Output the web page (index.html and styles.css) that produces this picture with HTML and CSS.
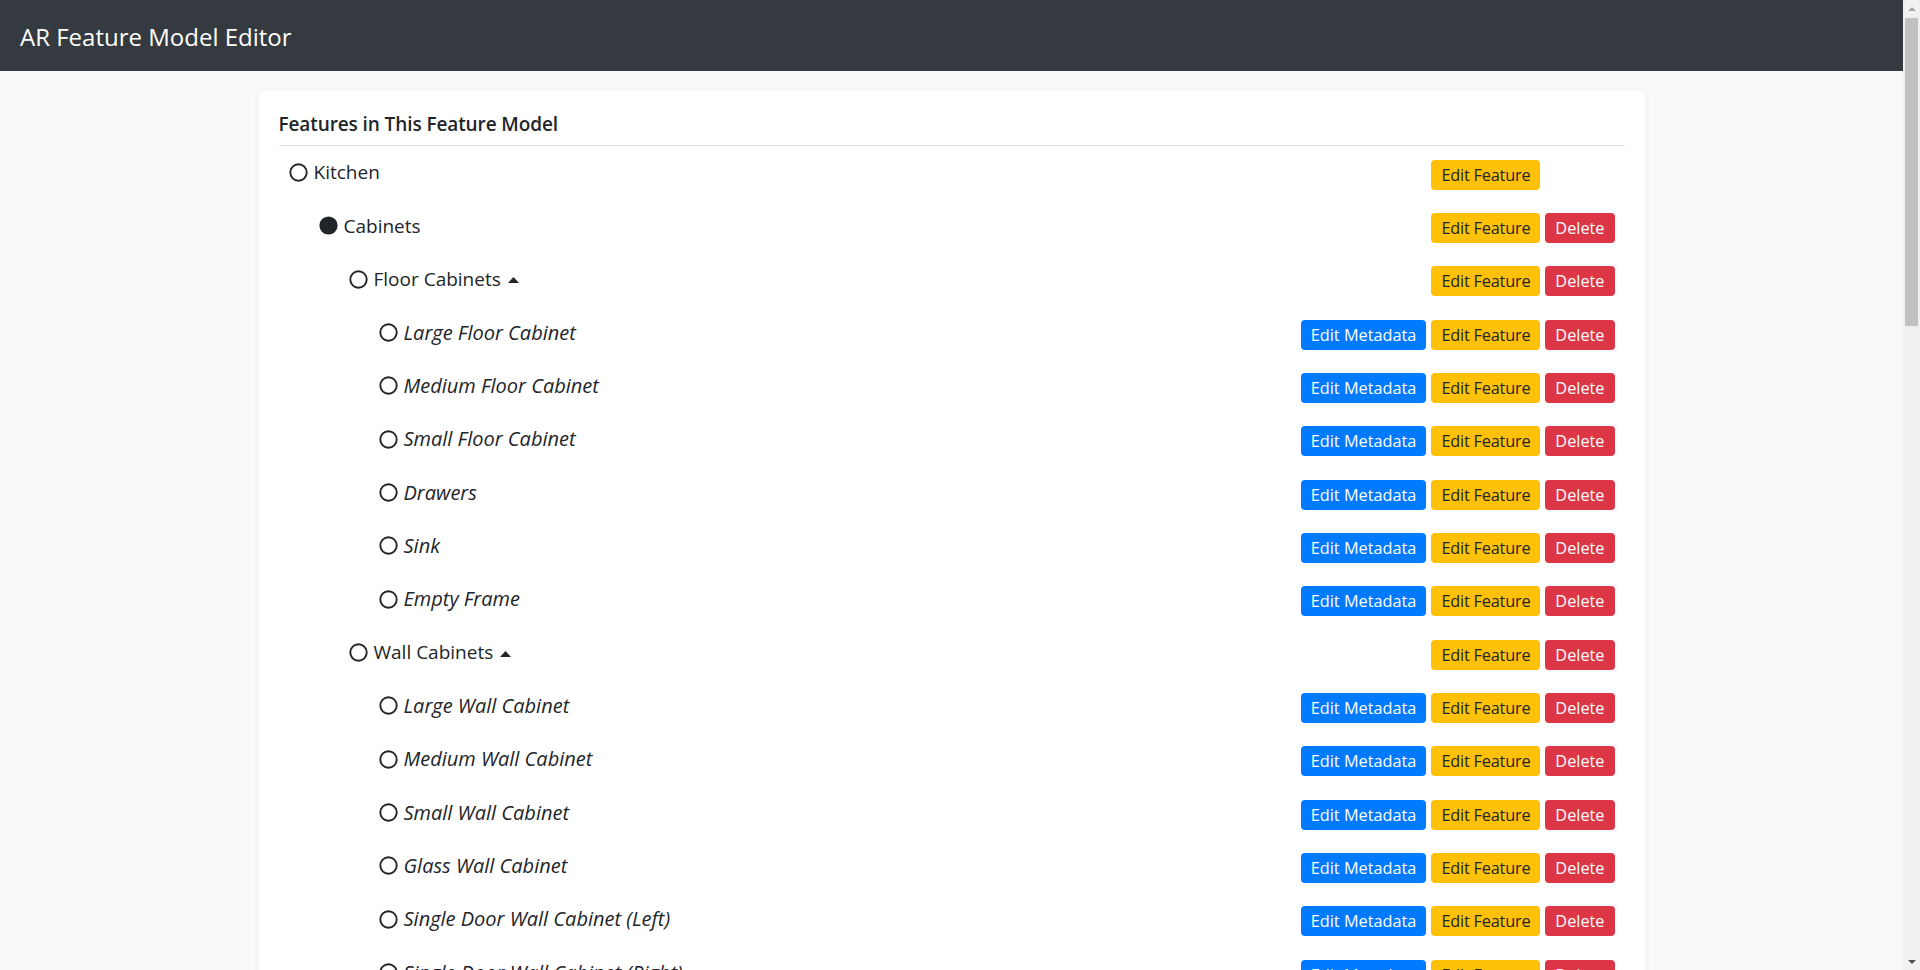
FILE: index.html
```html
<!DOCTYPE html>
<html lang="en">
<head>
<meta charset="utf-8">
<title>AR Feature Model Editor</title>
<link rel="stylesheet" href="styles.css">
</head>
<body>
<div class="page">
<div class="content">
<nav class="navbar"><span class="brand">AR Feature Model Editor</span></nav>
<main class="container">
  <section class="card">
    <h5 class="card-title">Features in This Feature Model</h5>
    <ul class="tree">
      <li class="node lvl-0"><span class="label"><svg class="ico" viewBox="0 0 19 19"><circle cx="9.5" cy="9.5" r="8.2" fill="none" stroke="currentColor" stroke-width="1.9"/></svg>Kitchen</span><span class="actions"><button class="btn btn-warning">Edit Feature</button><button class="btn btn-danger is-hidden">Delete</button></span></li>
      <li class="node lvl-1"><span class="label"><svg class="ico" viewBox="0 0 19 19"><circle cx="9.5" cy="9.5" r="9.1" fill="currentColor"/></svg>Cabinets</span><span class="actions"><button class="btn btn-warning">Edit Feature</button><button class="btn btn-danger">Delete</button></span></li>
      <li class="node lvl-2"><span class="label"><svg class="ico" viewBox="0 0 19 19"><circle cx="9.5" cy="9.5" r="8.2" fill="none" stroke="currentColor" stroke-width="1.9"/></svg>Floor Cabinets<svg class="caret" viewBox="0 0 11 6"><path d="M0 6 L5.5 0 L11 6 Z" fill="currentColor"/></svg></span><span class="actions"><button class="btn btn-warning">Edit Feature</button><button class="btn btn-danger">Delete</button></span></li>
      <li class="node lvl-3"><span class="label"><svg class="ico" viewBox="0 0 19 19"><circle cx="9.5" cy="9.5" r="8.2" fill="none" stroke="currentColor" stroke-width="1.9"/></svg><em>Large Floor Cabinet</em></span><span class="actions"><button class="btn btn-primary">Edit Metadata</button><button class="btn btn-warning">Edit Feature</button><button class="btn btn-danger">Delete</button></span></li>
      <li class="node lvl-3"><span class="label"><svg class="ico" viewBox="0 0 19 19"><circle cx="9.5" cy="9.5" r="8.2" fill="none" stroke="currentColor" stroke-width="1.9"/></svg><em>Medium Floor Cabinet</em></span><span class="actions"><button class="btn btn-primary">Edit Metadata</button><button class="btn btn-warning">Edit Feature</button><button class="btn btn-danger">Delete</button></span></li>
      <li class="node lvl-3"><span class="label"><svg class="ico" viewBox="0 0 19 19"><circle cx="9.5" cy="9.5" r="8.2" fill="none" stroke="currentColor" stroke-width="1.9"/></svg><em>Small Floor Cabinet</em></span><span class="actions"><button class="btn btn-primary">Edit Metadata</button><button class="btn btn-warning">Edit Feature</button><button class="btn btn-danger">Delete</button></span></li>
      <li class="node lvl-3"><span class="label"><svg class="ico" viewBox="0 0 19 19"><circle cx="9.5" cy="9.5" r="8.2" fill="none" stroke="currentColor" stroke-width="1.9"/></svg><em>Drawers</em></span><span class="actions"><button class="btn btn-primary">Edit Metadata</button><button class="btn btn-warning">Edit Feature</button><button class="btn btn-danger">Delete</button></span></li>
      <li class="node lvl-3"><span class="label"><svg class="ico" viewBox="0 0 19 19"><circle cx="9.5" cy="9.5" r="8.2" fill="none" stroke="currentColor" stroke-width="1.9"/></svg><em>Sink</em></span><span class="actions"><button class="btn btn-primary">Edit Metadata</button><button class="btn btn-warning">Edit Feature</button><button class="btn btn-danger">Delete</button></span></li>
      <li class="node lvl-3"><span class="label"><svg class="ico" viewBox="0 0 19 19"><circle cx="9.5" cy="9.5" r="8.2" fill="none" stroke="currentColor" stroke-width="1.9"/></svg><em>Empty Frame</em></span><span class="actions"><button class="btn btn-primary">Edit Metadata</button><button class="btn btn-warning">Edit Feature</button><button class="btn btn-danger">Delete</button></span></li>
      <li class="node lvl-2"><span class="label"><svg class="ico" viewBox="0 0 19 19"><circle cx="9.5" cy="9.5" r="8.2" fill="none" stroke="currentColor" stroke-width="1.9"/></svg>Wall Cabinets<svg class="caret" viewBox="0 0 11 6"><path d="M0 6 L5.5 0 L11 6 Z" fill="currentColor"/></svg></span><span class="actions"><button class="btn btn-warning">Edit Feature</button><button class="btn btn-danger">Delete</button></span></li>
      <li class="node lvl-3"><span class="label"><svg class="ico" viewBox="0 0 19 19"><circle cx="9.5" cy="9.5" r="8.2" fill="none" stroke="currentColor" stroke-width="1.9"/></svg><em>Large Wall Cabinet</em></span><span class="actions"><button class="btn btn-primary">Edit Metadata</button><button class="btn btn-warning">Edit Feature</button><button class="btn btn-danger">Delete</button></span></li>
      <li class="node lvl-3"><span class="label"><svg class="ico" viewBox="0 0 19 19"><circle cx="9.5" cy="9.5" r="8.2" fill="none" stroke="currentColor" stroke-width="1.9"/></svg><em>Medium Wall Cabinet</em></span><span class="actions"><button class="btn btn-primary">Edit Metadata</button><button class="btn btn-warning">Edit Feature</button><button class="btn btn-danger">Delete</button></span></li>
      <li class="node lvl-3"><span class="label"><svg class="ico" viewBox="0 0 19 19"><circle cx="9.5" cy="9.5" r="8.2" fill="none" stroke="currentColor" stroke-width="1.9"/></svg><em>Small Wall Cabinet</em></span><span class="actions"><button class="btn btn-primary">Edit Metadata</button><button class="btn btn-warning">Edit Feature</button><button class="btn btn-danger">Delete</button></span></li>
      <li class="node lvl-3"><span class="label"><svg class="ico" viewBox="0 0 19 19"><circle cx="9.5" cy="9.5" r="8.2" fill="none" stroke="currentColor" stroke-width="1.9"/></svg><em>Glass Wall Cabinet</em></span><span class="actions"><button class="btn btn-primary">Edit Metadata</button><button class="btn btn-warning">Edit Feature</button><button class="btn btn-danger">Delete</button></span></li>
      <li class="node lvl-3"><span class="label"><svg class="ico" viewBox="0 0 19 19"><circle cx="9.5" cy="9.5" r="8.2" fill="none" stroke="currentColor" stroke-width="1.9"/></svg><em>Single Door Wall Cabinet (Left)</em></span><span class="actions"><button class="btn btn-primary">Edit Metadata</button><button class="btn btn-warning">Edit Feature</button><button class="btn btn-danger">Delete</button></span></li>
      <li class="node lvl-3"><span class="label"><svg class="ico" viewBox="0 0 19 19"><circle cx="9.5" cy="9.5" r="8.2" fill="none" stroke="currentColor" stroke-width="1.9"/></svg><em>Single Door Wall Cabinet (Right)</em></span><span class="actions"><button class="btn btn-primary">Edit Metadata</button><button class="btn btn-warning">Edit Feature</button><button class="btn btn-danger">Delete</button></span></li>
      <li class="node lvl-3"><span class="label"><svg class="ico" viewBox="0 0 19 19"><circle cx="9.5" cy="9.5" r="8.2" fill="none" stroke="currentColor" stroke-width="1.9"/></svg><em>Corner Wall Cabinet</em></span><span class="actions"><button class="btn btn-primary">Edit Metadata</button><button class="btn btn-warning">Edit Feature</button><button class="btn btn-danger">Delete</button></span></li>
      <li class="node lvl-3"><span class="label"><svg class="ico" viewBox="0 0 19 19"><circle cx="9.5" cy="9.5" r="8.2" fill="none" stroke="currentColor" stroke-width="1.9"/></svg><em>Open Shelf</em></span><span class="actions"><button class="btn btn-primary">Edit Metadata</button><button class="btn btn-warning">Edit Feature</button><button class="btn btn-danger">Delete</button></span></li>
      <li class="node lvl-2"><span class="label"><svg class="ico" viewBox="0 0 19 19"><circle cx="9.5" cy="9.5" r="8.2" fill="none" stroke="currentColor" stroke-width="1.9"/></svg>Tall Cabinets<svg class="caret" viewBox="0 0 11 6"><path d="M0 6 L5.5 0 L11 6 Z" fill="currentColor"/></svg></span><span class="actions"><button class="btn btn-warning">Edit Feature</button><button class="btn btn-danger">Delete</button></span></li>
      <li class="node lvl-3"><span class="label"><svg class="ico" viewBox="0 0 19 19"><circle cx="9.5" cy="9.5" r="8.2" fill="none" stroke="currentColor" stroke-width="1.9"/></svg><em>Pantry Cabinet</em></span><span class="actions"><button class="btn btn-primary">Edit Metadata</button><button class="btn btn-warning">Edit Feature</button><button class="btn btn-danger">Delete</button></span></li>
      <li class="node lvl-3"><span class="label"><svg class="ico" viewBox="0 0 19 19"><circle cx="9.5" cy="9.5" r="8.2" fill="none" stroke="currentColor" stroke-width="1.9"/></svg><em>Oven Tower</em></span><span class="actions"><button class="btn btn-primary">Edit Metadata</button><button class="btn btn-warning">Edit Feature</button><button class="btn btn-danger">Delete</button></span></li>
      <li class="node lvl-3"><span class="label"><svg class="ico" viewBox="0 0 19 19"><circle cx="9.5" cy="9.5" r="8.2" fill="none" stroke="currentColor" stroke-width="1.9"/></svg><em>Fridge Housing</em></span><span class="actions"><button class="btn btn-primary">Edit Metadata</button><button class="btn btn-warning">Edit Feature</button><button class="btn btn-danger">Delete</button></span></li>
      <li class="node lvl-1"><span class="label"><svg class="ico" viewBox="0 0 19 19"><circle cx="9.5" cy="9.5" r="8.2" fill="none" stroke="currentColor" stroke-width="1.9"/></svg>Countertops</span><span class="actions"><button class="btn btn-warning">Edit Feature</button><button class="btn btn-danger">Delete</button></span></li>
      <li class="node lvl-2"><span class="label"><svg class="ico" viewBox="0 0 19 19"><circle cx="9.5" cy="9.5" r="8.2" fill="none" stroke="currentColor" stroke-width="1.9"/></svg><em>Granite</em></span><span class="actions"><button class="btn btn-primary">Edit Metadata</button><button class="btn btn-warning">Edit Feature</button><button class="btn btn-danger">Delete</button></span></li>
      <li class="node lvl-2"><span class="label"><svg class="ico" viewBox="0 0 19 19"><circle cx="9.5" cy="9.5" r="8.2" fill="none" stroke="currentColor" stroke-width="1.9"/></svg><em>Marble</em></span><span class="actions"><button class="btn btn-primary">Edit Metadata</button><button class="btn btn-warning">Edit Feature</button><button class="btn btn-danger">Delete</button></span></li>
      <li class="node lvl-2"><span class="label"><svg class="ico" viewBox="0 0 19 19"><circle cx="9.5" cy="9.5" r="8.2" fill="none" stroke="currentColor" stroke-width="1.9"/></svg><em>Wood</em></span><span class="actions"><button class="btn btn-primary">Edit Metadata</button><button class="btn btn-warning">Edit Feature</button><button class="btn btn-danger">Delete</button></span></li>
      <li class="node lvl-1"><span class="label"><svg class="ico" viewBox="0 0 19 19"><circle cx="9.5" cy="9.5" r="8.2" fill="none" stroke="currentColor" stroke-width="1.9"/></svg>Appliances</span><span class="actions"><button class="btn btn-warning">Edit Feature</button><button class="btn btn-danger">Delete</button></span></li>
      <li class="node lvl-2"><span class="label"><svg class="ico" viewBox="0 0 19 19"><circle cx="9.5" cy="9.5" r="8.2" fill="none" stroke="currentColor" stroke-width="1.9"/></svg><em>Refrigerator</em></span><span class="actions"><button class="btn btn-primary">Edit Metadata</button><button class="btn btn-warning">Edit Feature</button><button class="btn btn-danger">Delete</button></span></li>
      <li class="node lvl-2"><span class="label"><svg class="ico" viewBox="0 0 19 19"><circle cx="9.5" cy="9.5" r="8.2" fill="none" stroke="currentColor" stroke-width="1.9"/></svg><em>Oven</em></span><span class="actions"><button class="btn btn-primary">Edit Metadata</button><button class="btn btn-warning">Edit Feature</button><button class="btn btn-danger">Delete</button></span></li>
      <li class="node lvl-2"><span class="label"><svg class="ico" viewBox="0 0 19 19"><circle cx="9.5" cy="9.5" r="8.2" fill="none" stroke="currentColor" stroke-width="1.9"/></svg><em>Cooktop</em></span><span class="actions"><button class="btn btn-primary">Edit Metadata</button><button class="btn btn-warning">Edit Feature</button><button class="btn btn-danger">Delete</button></span></li>
      <li class="node lvl-2"><span class="label"><svg class="ico" viewBox="0 0 19 19"><circle cx="9.5" cy="9.5" r="8.2" fill="none" stroke="currentColor" stroke-width="1.9"/></svg><em>Range Hood</em></span><span class="actions"><button class="btn btn-primary">Edit Metadata</button><button class="btn btn-warning">Edit Feature</button><button class="btn btn-danger">Delete</button></span></li>
      <li class="node lvl-2"><span class="label"><svg class="ico" viewBox="0 0 19 19"><circle cx="9.5" cy="9.5" r="8.2" fill="none" stroke="currentColor" stroke-width="1.9"/></svg><em>Dishwasher</em></span><span class="actions"><button class="btn btn-primary">Edit Metadata</button><button class="btn btn-warning">Edit Feature</button><button class="btn btn-danger">Delete</button></span></li>
      <li class="node lvl-2"><span class="label"><svg class="ico" viewBox="0 0 19 19"><circle cx="9.5" cy="9.5" r="8.2" fill="none" stroke="currentColor" stroke-width="1.9"/></svg><em>Microwave</em></span><span class="actions"><button class="btn btn-primary">Edit Metadata</button><button class="btn btn-warning">Edit Feature</button><button class="btn btn-danger">Delete</button></span></li>
      <li class="node lvl-1"><span class="label"><svg class="ico" viewBox="0 0 19 19"><circle cx="9.5" cy="9.5" r="8.2" fill="none" stroke="currentColor" stroke-width="1.9"/></svg>Handles</span><span class="actions"><button class="btn btn-warning">Edit Feature</button><button class="btn btn-danger">Delete</button></span></li>
      <li class="node lvl-2"><span class="label"><svg class="ico" viewBox="0 0 19 19"><circle cx="9.5" cy="9.5" r="8.2" fill="none" stroke="currentColor" stroke-width="1.9"/></svg><em>Bar Handle</em></span><span class="actions"><button class="btn btn-primary">Edit Metadata</button><button class="btn btn-warning">Edit Feature</button><button class="btn btn-danger">Delete</button></span></li>
      <li class="node lvl-2"><span class="label"><svg class="ico" viewBox="0 0 19 19"><circle cx="9.5" cy="9.5" r="8.2" fill="none" stroke="currentColor" stroke-width="1.9"/></svg><em>Knob</em></span><span class="actions"><button class="btn btn-primary">Edit Metadata</button><button class="btn btn-warning">Edit Feature</button><button class="btn btn-danger">Delete</button></span></li>
      <li class="node lvl-2"><span class="label"><svg class="ico" viewBox="0 0 19 19"><circle cx="9.5" cy="9.5" r="8.2" fill="none" stroke="currentColor" stroke-width="1.9"/></svg><em>Cup Pull</em></span><span class="actions"><button class="btn btn-primary">Edit Metadata</button><button class="btn btn-warning">Edit Feature</button><button class="btn btn-danger">Delete</button></span></li>
      <li class="node lvl-1"><span class="label"><svg class="ico" viewBox="0 0 19 19"><circle cx="9.5" cy="9.5" r="8.2" fill="none" stroke="currentColor" stroke-width="1.9"/></svg>Colors</span><span class="actions"><button class="btn btn-warning">Edit Feature</button><button class="btn btn-danger">Delete</button></span></li>
      <li class="node lvl-2"><span class="label"><svg class="ico" viewBox="0 0 19 19"><circle cx="9.5" cy="9.5" r="8.2" fill="none" stroke="currentColor" stroke-width="1.9"/></svg><em>White</em></span><span class="actions"><button class="btn btn-primary">Edit Metadata</button><button class="btn btn-warning">Edit Feature</button><button class="btn btn-danger">Delete</button></span></li>
      <li class="node lvl-2"><span class="label"><svg class="ico" viewBox="0 0 19 19"><circle cx="9.5" cy="9.5" r="8.2" fill="none" stroke="currentColor" stroke-width="1.9"/></svg><em>Oak</em></span><span class="actions"><button class="btn btn-primary">Edit Metadata</button><button class="btn btn-warning">Edit Feature</button><button class="btn btn-danger">Delete</button></span></li>
      <li class="node lvl-2"><span class="label"><svg class="ico" viewBox="0 0 19 19"><circle cx="9.5" cy="9.5" r="8.2" fill="none" stroke="currentColor" stroke-width="1.9"/></svg><em>Walnut</em></span><span class="actions"><button class="btn btn-primary">Edit Metadata</button><button class="btn btn-warning">Edit Feature</button><button class="btn btn-danger">Delete</button></span></li>
      <li class="node lvl-2"><span class="label"><svg class="ico" viewBox="0 0 19 19"><circle cx="9.5" cy="9.5" r="8.2" fill="none" stroke="currentColor" stroke-width="1.9"/></svg><em>Anthracite</em></span><span class="actions"><button class="btn btn-primary">Edit Metadata</button><button class="btn btn-warning">Edit Feature</button><button class="btn btn-danger">Delete</button></span></li>
      <li class="node lvl-1"><span class="label"><svg class="ico" viewBox="0 0 19 19"><circle cx="9.5" cy="9.5" r="8.2" fill="none" stroke="currentColor" stroke-width="1.9"/></svg>Lighting</span><span class="actions"><button class="btn btn-warning">Edit Feature</button><button class="btn btn-danger">Delete</button></span></li>
      <li class="node lvl-2"><span class="label"><svg class="ico" viewBox="0 0 19 19"><circle cx="9.5" cy="9.5" r="8.2" fill="none" stroke="currentColor" stroke-width="1.9"/></svg><em>Under Cabinet Light</em></span><span class="actions"><button class="btn btn-primary">Edit Metadata</button><button class="btn btn-warning">Edit Feature</button><button class="btn btn-danger">Delete</button></span></li>
      <li class="node lvl-2"><span class="label"><svg class="ico" viewBox="0 0 19 19"><circle cx="9.5" cy="9.5" r="8.2" fill="none" stroke="currentColor" stroke-width="1.9"/></svg><em>Pendant Light</em></span><span class="actions"><button class="btn btn-primary">Edit Metadata</button><button class="btn btn-warning">Edit Feature</button><button class="btn btn-danger">Delete</button></span></li>
      <li class="node lvl-2"><span class="label"><svg class="ico" viewBox="0 0 19 19"><circle cx="9.5" cy="9.5" r="8.2" fill="none" stroke="currentColor" stroke-width="1.9"/></svg><em>Spot Light</em></span><span class="actions"><button class="btn btn-primary">Edit Metadata</button><button class="btn btn-warning">Edit Feature</button><button class="btn btn-danger">Delete</button></span></li>
    </ul>
  </section>
</main>
</div>
<div class="scrollbar" aria-hidden="true">
  <span class="sb-arrow"><span class="tri-up"></span></span>
  <span class="sb-track"><span class="sb-thumb"></span></span>
  <span class="sb-arrow"><span class="tri-down"></span></span>
</div>
</div>
</body>
</html>
```
FILE: styles.css
```css
* { box-sizing: border-box; }

html, body {
  margin: 0;
  padding: 0;
  height: 100%;
  overflow: hidden;
}

body {
  background: #f8f9fa;
  color: #212529;
  font-family: "Open Sans", "Noto Sans", "Liberation Sans", sans-serif;
  font-size: 19px;
  line-height: 1.5;
}

.page {
  display: grid;
  grid-template-columns: minmax(0, 1fr) 17px;
  height: 100vh;
  overflow: hidden;
}

.content {
  min-width: 0;
}

/* window scrollbar */
.scrollbar {
  height: 100vh;
  background: #f1f1f1;
  display: flex;
  flex-direction: column;
}

.sb-arrow {
  height: 17px;
  flex: none;
  display: flex;
  align-items: center;
  justify-content: center;
}

.tri-up {
  width: 0;
  height: 0;
  border-left: 4px solid transparent;
  border-right: 4px solid transparent;
  border-bottom: 4px solid #a3a3a3;
}

.tri-down {
  width: 0;
  height: 0;
  border-left: 4px solid transparent;
  border-right: 4px solid transparent;
  border-top: 4px solid #505050;
}

.sb-track {
  flex: 1;
  padding: 1px 2px;
}

.sb-thumb {
  display: block;
  height: 308px;
  background: #c1c1c1;
}

.navbar {
  height: 71px;
  background: #343a40;
  display: flex;
  align-items: center;
  padding: 0 20px;
}

.brand {
  color: #fff;
  font-size: 24px;
  line-height: 1;
  padding-top: 3px;
}

.container {
  width: 1386px;
  margin: 20px auto;
}

.card {
  background: #fff;
  border-radius: 6px;
  box-shadow: 0 1px 6px rgba(0, 0, 0, 0.06);
  padding: 20px;
}

.card-title {
  margin: 0;
  font-size: 19px;
  font-weight: 600;
  letter-spacing: -0.1px;
  line-height: 26px;
  padding-bottom: 8px;
  border-bottom: 1px solid #dee2e6;
}

.tree {
  list-style: none;
  margin: 0;
  padding: 0;
}

.node {
  height: 53.33px;
  display: flex;
  align-items: center;
  justify-content: space-between;
  padding-right: 10px;
}

.lvl-0 { padding-left: 10px; }
.lvl-1 { padding-left: 40px; }
.lvl-2 { padding-left: 70px; }
.lvl-3 { padding-left: 100px; }

.label {
  display: flex;
  align-items: center;
}

.label em {
  font-style: italic;
  font-size: 20px;
}

.ico {
  width: 19px;
  height: 19px;
  margin-right: 6px;
  flex: none;
}

.caret {
  width: 11px;
  height: 6px;
  margin-left: 7px;
  margin-top: 2px;
}

.actions {
  display: flex;
  gap: 5px;
  margin-top: 4px;
}

.btn {
  height: 30px;
  padding: 0 10px;
  border: 0;
  border-radius: 4px;
  font-family: inherit;
  font-size: 16.3px;
  line-height: 30px;
}

.btn-primary { background: #007bff; color: #fff; }
.btn-warning { background: #ffc107; color: #212529; letter-spacing: -0.2px; }
.btn-danger { background: #dc3545; color: #fff; }

.is-hidden { visibility: hidden; }
```
